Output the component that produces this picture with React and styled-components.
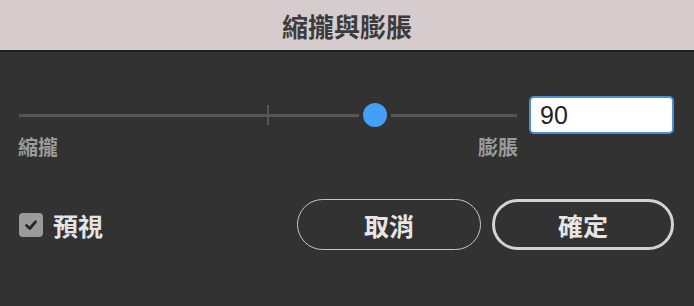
import React from "react";
import styled, { createGlobalStyle } from "styled-components";

const Global = createGlobalStyle`
  html, body { margin: 0; padding: 0; background: #323232; }
  body { font-family: "Noto Sans CJK TC", "Noto Sans", sans-serif; }
`;

const Dialog = styled.div`
  width: 694px;
  height: 306px;
  background: #323232;
  display: flex;
  flex-direction: column;
`;

const TitleBar = styled.div`
  height: 50px;
  background: #d6cccd;
  border-bottom: 2px solid #1f1f1f;
  display: flex;
  align-items: center;
  justify-content: center;
  font-size: 26px;
  font-weight: 700;
  color: #3b3b3b;
`;

const Body = styled.div`
  padding: 44px 20px 0 19px;
  display: flex;
  flex-direction: column;
`;

const SliderGrid = styled.div`
  display: grid;
  grid-template-columns: 1fr 145px;
  column-gap: 12px;
`;

const Track = styled.div`
  position: relative;
  height: 38px;
  display: flex;
  align-items: center;
`;

const Rail = styled.div`
  width: 100%;
  height: 3px;
  background: #565656;
`;

const Tick = styled.div`
  position: absolute;
  left: 50%;
  top: 9px;
  width: 2px;
  height: 20px;
  margin-left: -1px;
  background: #565656;
`;

const Thumb = styled.div`
  position: absolute;
  top: 7px;
  width: 24px;
  height: 24px;
  margin-left: -12px;
  border-radius: 50%;
  background: #42a0f7;
  box-shadow: 0 0 0 4px #323232;
`;

const NumberBox = styled.div`
  box-sizing: border-box;
  height: 38px;
  background: #fff;
  border: 2px solid #4a8fd8;
  border-radius: 5px;
  display: flex;
  align-items: center;
  padding-left: 9px;
  font-family: "Liberation Sans", "Noto Sans", sans-serif;
  font-size: 25px;
  color: #222;
`;

const Labels = styled.div`
  display: flex;
  justify-content: space-between;
  font-size: 20px;
  font-weight: 700;
  color: #9c9c9c;
  line-height: 26px;
  margin-left: -1px;
  margin-right: -1px;
`;

const Footer = styled.div`
  display: flex;
  align-items: center;
  margin-top: 39px;
`;

const Check = styled.label`
  display: flex;
  align-items: center;
  gap: 10px;
  font-size: 25px;
  font-weight: 700;
  color: #e4e4e4;
  flex: 1;
`;

const Box = styled.span`
  width: 24px;
  height: 24px;
  border-radius: 4px;
  background: #9b9b9b;
  display: flex;
  align-items: center;
  justify-content: center;
`;

const Button = styled.button`
  box-sizing: border-box;
  width: ${(p) => p.$w}px;
  height: 51px;
  margin-left: ${(p) => p.$ml}px;
  border-radius: 26px;
  background: transparent;
  border: ${(p) => (p.$primary ? "3px solid #d3d3d3" : "1.5px solid #c6c6c6")};
  color: #e6e6e6;
  font-family: "Noto Sans CJK TC", sans-serif;
  font-size: 25px;
  font-weight: 700;
  display: flex;
  align-items: center;
  justify-content: center;
  padding: 0;
`;

export default function App() {
  const pct = 71.5;
  return (
    <>
      <Global />
      <Dialog>
        <TitleBar>縮攏與膨脹</TitleBar>
        <Body>
          <SliderGrid>
            <Track>
              <Rail />
              <Tick />
              <Thumb style={{ left: `${pct}%` }} />
            </Track>
            <NumberBox>90</NumberBox>
            <Labels>
              <span>縮攏</span>
              <span>膨脹</span>
            </Labels>
          </SliderGrid>
          <Footer>
            <Check>
              <Box>
                <svg width="16" height="16" viewBox="0 0 16 16">
                  <path d="M3.5 8.5 L6.8 11.5 L12.5 4.8" fill="none" stroke="#262626" strokeWidth="2.8" strokeLinecap="round" strokeLinejoin="round" />
                </svg>
              </Box>
              預視
            </Check>
            <Button $w={184} $ml={0}>取消</Button>
            <Button $w={182} $ml={11} $primary>確定</Button>
          </Footer>
        </Body>
      </Dialog>
    </>
  );
}
